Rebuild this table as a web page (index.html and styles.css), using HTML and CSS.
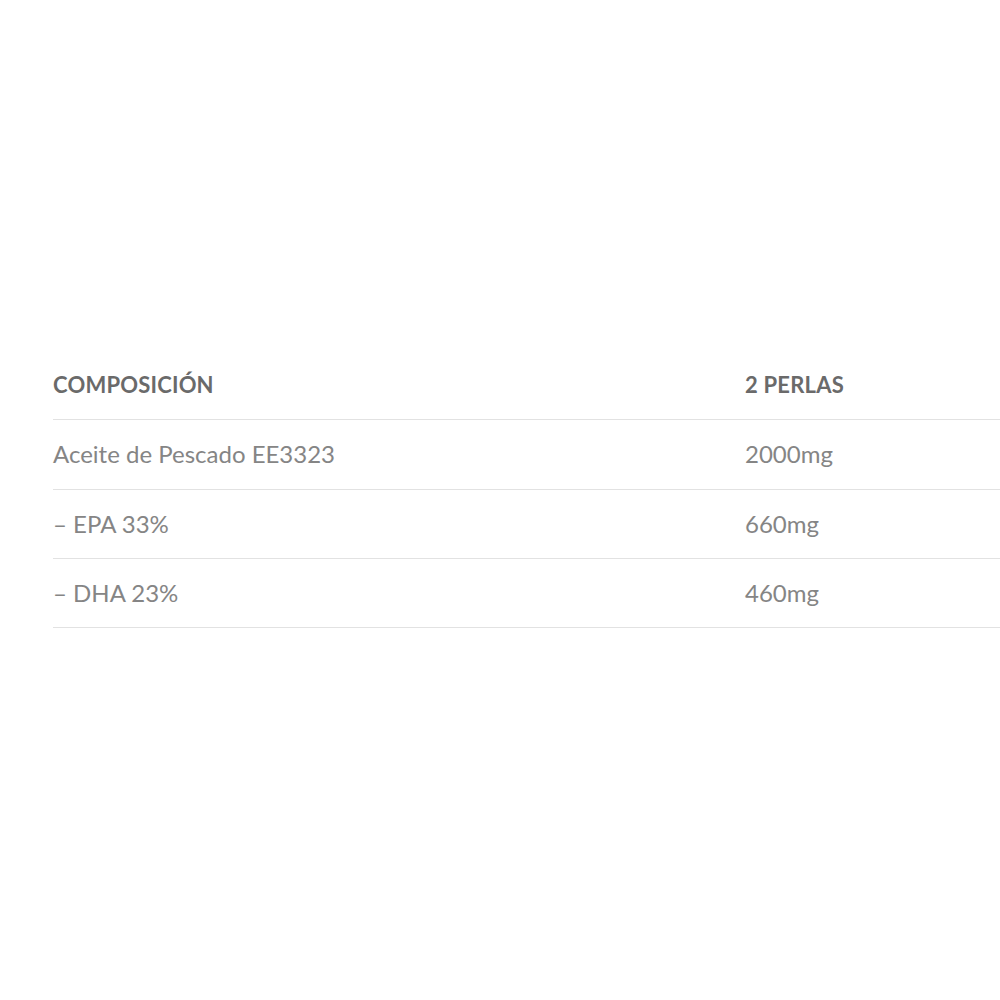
FILE: index.html
```html
<!DOCTYPE html>
<html lang="es">
<head>
<meta charset="utf-8">
<link rel="stylesheet" href="styles.css">
</head>
<body>
<div class="page">
  <div class="table">
    <div class="row head"><span>COMPOSICIÓN</span><span>2 PERLAS</span></div>
    <div class="row"><span>Aceite de Pescado EE3323</span><span>2000mg</span></div>
    <div class="row"><span>– EPA 33%</span><span>660mg</span></div>
    <div class="row"><span>– DHA 23%</span><span>460mg</span></div>
  </div>
</div>
</body>
</html>
```
FILE: styles.css
```css
html, body { margin: 0; background: #fff; }
.page { padding: 351px 0 0 53px; font-family: Lato, "Noto Sans", sans-serif; }
.table { display: flex; flex-direction: column; }
.row {
  display: grid;
  grid-template-columns: 692px 1fr;
  align-items: center;
  height: 69.33px;
  box-sizing: border-box;
  border-bottom: 1px solid #e2e2e2;
  font-size: 24px;
  color: #858585;
  padding-bottom: 1px;
}
.head { font-weight: 700; color: #6a6a6a; font-size: 22px; letter-spacing: 0.2px; }
```
